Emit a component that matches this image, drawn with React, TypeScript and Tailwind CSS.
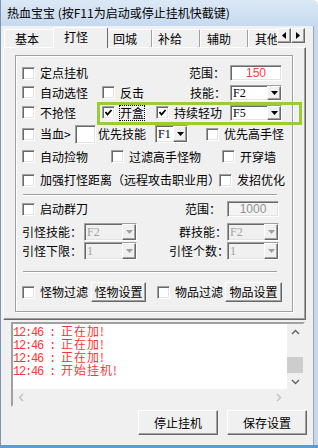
import React from 'react';

const sunken =
  'border border-t-[#a0a0a0] border-l-[#a0a0a0] border-r-white border-b-white shadow-[inset_1px_1px_0_#696969,inset_-1px_-1px_0_#e3e3e3]';
const raised =
  'bg-[#f0f0f0] border border-t-white border-l-white border-r-[#696969] border-b-[#696969] shadow-[inset_-1px_-1px_0_#a0a0a0]';
const etched = 'h-px bg-[#a0a0a0] shadow-[0_1px_0_#fff]';

function CheckBox({ checked }: { checked?: boolean }) {
  return (
    <div className={`relative w-[13px] h-[13px] shrink-0 bg-white ${sunken}`}>
      {checked && (
        <svg viewBox="0 0 11 11" className="absolute left-0 top-0 w-[11px] h-[11px]">
          <path d="M2.5 5 L4.5 7.5 L8.5 3" fill="none" stroke="#000" strokeWidth={1.8} />
        </svg>
      )}
    </div>
  );
}

function Check({ label, checked, focus, className = '' }: { label: string; checked?: boolean; focus?: boolean; className?: string }) {
  return (
    <div className={`flex items-center shrink-0 ${className}`}>
      <CheckBox checked={checked} />
      <span className={`ml-[5px] whitespace-nowrap leading-[14px] ${focus ? 'outline-1 outline-dotted outline-black' : ''}`}>
        {label}
      </span>
    </div>
  );
}

function Drop({ value, className = '', disabled }: { value: string; className?: string; disabled?: boolean }) {
  return (
    <div className={`flex shrink-0 ${sunken} ${disabled ? 'bg-[#f0f0f0] text-[#a0a0a0]' : 'bg-white text-black'} ${className}`}>
      <div className="flex-1 pl-[2px] flex items-center font-['Liberation_Serif',serif] text-[12px] leading-none">{value}</div>
      <div className={`w-[14px] flex items-center justify-center ${raised}`}>
        <svg width="7" height="4" viewBox="0 0 7 4">
          <path d="M0 0h7L3.5 4z" fill={disabled ? '#a0a0a0' : '#000'} />
        </svg>
      </div>
    </div>
  );
}

function Chevron({ dir, color }: { dir: 'up' | 'down' | 'left' | 'right'; color: string }) {
  const d = {
    up: 'M1 5 L4.5 1.5 L8 5',
    down: 'M1 2 L4.5 5.5 L8 2',
    left: 'M5 1 L1.5 4.5 L5 8',
    right: 'M2 1 L5.5 4.5 L2 8',
  }[dir];
  const box = dir === 'up' || dir === 'down' ? '0 0 9 7' : '0 0 7 9';
  return (
    <svg viewBox={box} className={dir === 'up' || dir === 'down' ? 'w-[9px] h-[7px]' : 'w-[7px] h-[9px]'}>
      <path d={d} fill="none" stroke={color} strokeWidth={1.4} />
    </svg>
  );
}

const tabs = [
  { t: '基本', cls: 'w-[51px] pl-[10px]' },
  { t: '打怪', cls: 'w-[55px] pl-[10px]', on: true },
  { t: '回城', cls: 'w-[46px] pl-[6px]' },
  { t: '补给', cls: 'w-[48px] pl-[5px]' },
  { t: '辅助', cls: 'w-[48px] pl-[6px]' },
];

const logs = ['正在加!', '正在加!', '正在加!', '开始挂机!'];

export default function App() {
  return (
    <div className="relative w-[318px] h-[448px] overflow-hidden flex flex-col bg-[#c4d9ef] border-l border-[#7d97b3] rounded-tr-[6px] text-[12px] text-black font-['Noto_Sans_CJK_SC',sans-serif]">
      {/* title bar */}
      <div className="h-[26px] shrink-0 flex items-center pl-[6px] bg-gradient-to-b from-[#dbe8f6] to-[#c7daef] whitespace-nowrap">
        热血宝宝 (按F11为启动或停止挂机快截键)
      </div>

      <div className="flex flex-1">
        <div className="w-[312px] bg-[#f0f0f0] flex flex-col">
          {/* tabs */}
          <div className="mt-[1px] h-[20px] flex items-end pl-[3px]">
            {tabs.map((tab) =>
              tab.on ? (
                <div
                  key={tab.t}
                  className={`${tab.cls} relative z-10 -mx-[2px] -mb-px h-[21px] flex items-center pb-[3px] bg-[#f0f0f0] border-t border-l border-white border-r border-r-[#696969] rounded-t-[2px]`}
                >
                  {tab.t}
                </div>
              ) : (
                <div
                  key={tab.t}
                  className={`${tab.cls} h-[18px] flex items-center whitespace-nowrap border-t border-l border-white border-r border-r-[#a0a0a0] rounded-t-[2px]`}
                >
                  {tab.t}
                </div>
              )
            )}
            <div className="w-[29px] h-[18px] overflow-hidden border-t border-l border-white rounded-tl-[2px]">
              <div className="w-[40px] h-[17px] pl-[6px] flex items-center whitespace-nowrap">其他</div>
            </div>
            <div className="self-start mt-[1px] flex">
              <div className={`w-[14px] h-[15px] flex items-center justify-center ${raised}`}>
                <svg width="4" height="7" viewBox="0 0 4 7"><path d="M4 0v7L0 3.5z" fill="#000" /></svg>
              </div>
              <div className={`w-[14px] h-[15px] flex items-center justify-center ${raised}`}>
                <svg width="4" height="7" viewBox="0 0 4 7"><path d="M0 0v7l4-3.5z" fill="#000" /></svg>
              </div>
            </div>
          </div>

          {/* tab panel */}
          <div className="ml-[2px] w-[303px] h-[273px] border border-t-white border-l-white border-r-[#696969] border-b-[#696969] shadow-[inset_-1px_-1px_0_#a0a0a0]">
            <div className="ml-[11px] mt-[7px] w-[278px] h-[257px] border border-[#a0a0a0] shadow-[inset_1px_1px_0_#fff,1px_1px_0_#fff]">
              <div className="pl-[6px] pt-[7px] w-[266px] flex flex-col">
                <div className="w-[260px] h-[20px] flex items-center">
                  <Check label="定点挂机" />
                  <div className="flex-1" />
                  <span>范围：</span>
                  <div className={`ml-[5px] w-[52px] h-[16px] bg-white flex items-center justify-center text-[#ff4040] font-['Liberation_Sans',sans-serif] ${sunken}`}>
                    150
                  </div>
                </div>

                <div className="w-[260px] h-[19px] flex items-center">
                  <Check label="自动选怪" className="w-[80px]" />
                  <Check label="反击" />
                  <div className="flex-1" />
                  <span>技能：</span>
                  <Drop value="F2" className="ml-[4px] w-[52px] h-[16px]" />
                </div>

                <div className="w-[260px] h-[21px] flex items-center">
                  <Check label="不抢怪" className="w-[80px]" />
                  <Check label="开盒" checked focus className="w-[54px]" />
                  <Check label="持续轻功" checked />
                  <div className="flex-1" />
                  <Drop value="F5" className="w-[52px] h-[16px]" />
                </div>

                <div className="w-[260px] h-[22px] flex items-center">
                  <Check label="当血>" className="w-[53px]" />
                  <div className={`w-[21px] h-[19px] bg-white shrink-0 ${sunken}`} />
                  <span className="ml-[2px] w-[57px] shrink-0">优先技能</span>
                  <Drop value="F1" className="w-[33px] h-[18px]" />
                  <Check label="优先高手怪" className="ml-[18px]" />
                </div>

                <div className="w-[260px] h-[23px] flex items-center">
                  <Check label="自动捡物" className="w-[89px]" />
                  <Check label="过滤高手怪物" className="w-[111px]" />
                  <Check label="开穿墙" />
                </div>

                <div className="w-[260px] h-[24px] flex items-center">
                  <Check label="加强打怪距离（远程攻击职业用）" className="w-[197px]" />
                  <Check label="发招优化" />
                </div>

                <div className={`mt-[2px] ml-[1px] w-[254px] ${etched}`} />

                <div className="mt-[4px] w-[260px] h-[20px] flex items-center">
                  <Check label="启动群刀" />
                  <div className="flex-1" />
                  <span>范围：</span>
                  <div className={`ml-[6px] mr-[3px] w-[52px] h-[16px] bg-[#f4f4f4] flex items-center justify-center text-[#909090] font-['Liberation_Sans',sans-serif] ${sunken}`}>
                    1000
                  </div>
                </div>

                <div className="mt-[3px] w-[260px] h-[19px] flex items-center">
                  <span className="w-[62px] shrink-0">引怪技能：</span>
                  <Drop value="F2" disabled className="w-[53px] h-[18px]" />
                  <div className="flex-1" />
                  <span>群技能：</span>
                  <Drop value="F2" disabled className="mr-[3px] w-[52px] h-[18px]" />
                </div>

                <div className="w-[260px] h-[20px] flex items-center">
                  <span className="w-[62px] shrink-0">引怪下限：</span>
                  <Drop value="1" disabled className="w-[53px] h-[18px]" />
                  <div className="flex-1" />
                  <span className="-mr-[2px]">引怪个数：</span>
                  <Drop value="1" disabled className="mr-[3px] w-[52px] h-[18px]" />
                </div>

                <div className={`mt-[10px] ml-[1px] w-[254px] ${etched}`} />

                <div className="mt-[10px] w-[260px] h-[20px] flex items-center">
                  <Check label="怪物过滤" className="w-[69px]" />
                  <div className={`w-[55px] h-[20px] shrink-0 flex items-center justify-center ${raised}`}>怪物设置</div>
                  <Check label="物品过滤" className="ml-[11px] w-[68px]" />
                  <div className={`w-[57px] h-[20px] shrink-0 flex items-center justify-center ${raised}`}>物品设置</div>
                </div>
              </div>
            </div>
          </div>

          {/* log */}
          <div className="mt-[2px] ml-[10px] w-[294px] h-[85px] bg-white flex flex-col border-2 border-t-[#a0a0a0] border-l-[#a0a0a0] border-r-[#f0f0f0] border-b-[#f0f0f0]">
            <div className="flex h-[65px]">
              <div className="flex-1 overflow-hidden">
                {logs.map((l, i) => (
                  <div key={i} className="h-[13px] leading-[13px] whitespace-nowrap text-[#ff3535]">
                    <span className="font-['Liberation_Mono',monospace] whitespace-pre tracking-[-1.2px]">12:46 : </span>
                    <span className="tracking-[1px]">{l}</span>
                  </div>
                ))}
              </div>
              <div className="w-[16px] bg-[#f0f0f0] flex flex-col">
                <div className="h-[16px] flex items-center justify-center"><Chevron dir="up" color="#606060" /></div>
                <div className="h-[17px]" />
                <div className="h-[16px] bg-[#cdcdcd]" />
                <div className="h-px" />
                <div className="h-[15px] flex items-center justify-center"><Chevron dir="down" color="#606060" /></div>
              </div>
            </div>
            <div className="flex h-[16px]">
              <div className="flex-1 bg-[#f0f0f0] flex items-center justify-between px-[5px]">
                <Chevron dir="left" color="#c0c0c0" />
                <Chevron dir="right" color="#c0c0c0" />
              </div>
              <div className="w-[16px] bg-[#f0f0f0]" />
            </div>
          </div>

          {/* buttons */}
          <div className="mt-[3px] flex justify-end gap-[9px] pr-[6px]">
            <div className={`w-[80px] h-[25px] flex items-center justify-center ${raised}`}>停止挂机</div>
            <div className={`w-[80px] h-[25px] flex items-center justify-center ${raised}`}>保存设置</div>
          </div>
        </div>
        <div className="flex-1 border-l border-[#9aa9b8] bg-[#c4d9ef]" />
      </div>
      <div className="h-[3px] shrink-0 bg-[#5d9bd1]" />

      {/* annotation highlight */}
      <div className="absolute left-[96px] top-[102px] w-[205px] h-[23px] border-[3px] border-[#9acd32] pointer-events-none" />
    </div>
  );
}
